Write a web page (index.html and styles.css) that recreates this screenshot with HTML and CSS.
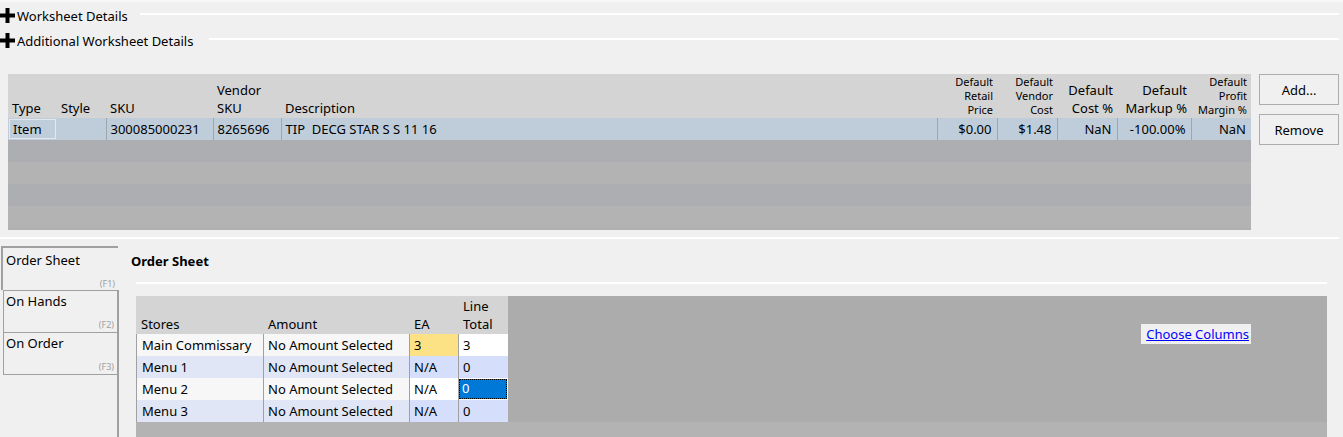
FILE: index.html
```html
<!DOCTYPE html>
<html lang="en">
<head>
<meta charset="utf-8">
<title>Worksheet</title>
<link rel="stylesheet" href="styles.css">
</head>
<body>
<div class="page">
  <div class="group-header first">
    <svg class="plus" viewBox="0 0 15 15" aria-hidden="true"><path d="M5.5 0h4v5.5H15v4H9.5V15h-4V9.5H0v-4h5.5z" fill="#000"/></svg>
    <span class="group-title">Worksheet Details</span>
    <div class="group-rule"></div>
  </div>
  <div class="group-header">
    <svg class="plus" viewBox="0 0 15 15" aria-hidden="true"><path d="M5.5 0h4v5.5H15v4H9.5V15h-4V9.5H0v-4h5.5z" fill="#000"/></svg>
    <span class="group-title">Additional Worksheet Details</span>
    <div class="group-rule second"></div>
  </div>

  <div class="items-area">
    <div class="items-grid">
      <table class="items">
        <colgroup>
          <col style="width:49px"><col style="width:49px"><col style="width:107px"><col style="width:68px"><col style="width:656px">
          <col style="width:60px"><col style="width:60px"><col style="width:60px"><col style="width:74px"><col style="width:60px">
        </colgroup>
        <thead>
          <tr>
            <th>Type</th>
            <th>Style</th>
            <th>SKU</th>
            <th>Vendor<br>SKU</th>
            <th>Description</th>
            <th class="num small">Default<br>Retail<br>Price</th>
            <th class="num small">Default<br>Vendor<br>Cost</th>
            <th class="num">Default<br>Cost %</th>
            <th class="num">Default<br>Markup %</th>
            <th class="num small">Default<br>Profit<br>Margin %</th>
          </tr>
        </thead>
        <tbody>
          <tr class="sel-row">
            <td class="focus"><span class="focus-box">Item</span></td>
            <td></td>
            <td class="sep">300085000231</td>
            <td class="sep">8265696</td>
            <td class="sep desc">TIP  DECG STAR S S 11 16</td>
            <td class="sep num">$0.00</td>
            <td class="sep num">$1.48</td>
            <td class="sep num">NaN</td>
            <td class="sep num">-100.00%</td>
            <td class="sep num">NaN</td>
          </tr>
          <tr class="filler a"><td colspan="10"></td></tr>
          <tr class="filler b"><td colspan="10"></td></tr>
          <tr class="filler a"><td colspan="10"></td></tr>
          <tr class="filler b"><td colspan="10"></td></tr>
        </tbody>
      </table>
    </div>
    <div class="side-buttons">
      <button class="btn">Add...</button>
      <button class="btn">Remove</button>
    </div>
  </div>

  <div class="splitter"></div>

  <div class="bottom">
    <div class="tabs">
      <div class="tab selected">
        <span class="tab-label">Order Sheet</span>
        <span class="tab-key">(F1)</span>
      </div>
      <div class="tab-rest">
        <div class="tab">
          <span class="tab-label">On Hands</span>
          <span class="tab-key">(F2)</span>
        </div>
        <div class="tab last">
          <span class="tab-label">On Order</span>
          <span class="tab-key">(F3)</span>
        </div>
      </div>
    </div>

    <div class="tab-content">
      <div class="content-title">Order Sheet</div>
      <div class="content-rule"></div>
      <div class="order-grid">
        <div class="order-top">
          <div class="order-table">
            <div class="o-row o-head">
              <div class="o-cell c-store">Stores</div>
              <div class="o-cell c-amount">Amount</div>
              <div class="o-cell c-ea">EA</div>
              <div class="o-cell c-total">Line<br>Total</div>
            </div>
            <div class="o-row r-light">
              <div class="o-cell c-store">Main Commissary</div>
              <div class="o-cell c-amount">No Amount Selected</div>
              <div class="o-cell c-ea edit-yellow">3</div>
              <div class="o-cell c-total edit-white">3</div>
            </div>
            <div class="o-row r-blue">
              <div class="o-cell c-store">Menu 1</div>
              <div class="o-cell c-amount">No Amount Selected</div>
              <div class="o-cell c-ea">N/A</div>
              <div class="o-cell c-total">0</div>
            </div>
            <div class="o-row r-light">
              <div class="o-cell c-store">Menu 2</div>
              <div class="o-cell c-amount">No Amount Selected</div>
              <div class="o-cell c-ea edit-white">N/A</div>
              <div class="o-cell c-total current"><span class="current-box">0</span></div>
            </div>
            <div class="o-row r-blue">
              <div class="o-cell c-store">Menu 3</div>
              <div class="o-cell c-amount">No Amount Selected</div>
              <div class="o-cell c-ea">N/A</div>
              <div class="o-cell c-total">0</div>
            </div>
          </div>
        </div>
        <div class="order-bottom"></div>
        <a class="choose-columns" href="#">Choose Columns</a>
      </div>
    </div>
  </div>
</div>
</body>
</html>
```

FILE: styles.css
```css
* { box-sizing: border-box; }
html, body { margin: 0; padding: 0; }
body {
  background: #f0f0f0;
  font-family: "Noto Sans", "Open Sans", sans-serif;
  font-size: 13px;
  color: #000;
  overflow: hidden;
}
.page {
  width: 1343px;
  height: 437px;
  border-top: 2px solid #f7f7f7;
  display: flex;
  flex-direction: column;
  overflow: hidden;
}

/* collapsible group headers */
.group-header {
  display: flex;
  align-items: center;
  height: 25px;
  padding-right: 4px;
  flex: none;
}
.group-header.first { margin-top: 1px; }
.plus { width: 15px; height: 15px; flex: none; margin-right: 2px; }
.group-title { white-space: nowrap; }
.group-rule {
  flex: 1;
  height: 2px;
  background: #fff;
  margin-left: 12px;
  margin-bottom: 3px;
}
.group-rule.second { margin-left: 16px; }

/* items grid */
.items-area {
  display: flex;
  margin-top: 21px;
  padding-left: 8px;
  flex: none;
}
.items-grid {
  width: 1243px;
  height: 156px;
  background: #b0b0b2;
  overflow: hidden;
}
.items {
  border-collapse: collapse;
  table-layout: fixed;
  width: 1243px;
}
.items th {
  height: 44px;
  background: #d4d4d4;
  font-weight: normal;
  text-align: left;
  vertical-align: bottom;
  padding: 0 3px 1px 4px;
  line-height: 18px;
  white-space: nowrap;
}
.items th.num { text-align: right; padding-right: 4px; padding-left: 0; }
.items th.small { font-size: 11px; line-height: 14px; padding-bottom: 1px; }
.items td {
  height: 22px;
  padding: 0 4px;
  white-space: pre;
  overflow: hidden;
}
.sel-row td { background: #bfcddb; }
.items td.sep { border-left: 1px solid #9ea6ae; }
.items td.num { text-align: right; padding-right: 5px; }
.items td.focus { padding: 1px; }
.focus-box {
  display: block;
  height: 20px;
  line-height: 18px;
  border: 1px solid #e2e8ee;
  padding-left: 3px;
}
.filler td { height: 22px; padding: 0; }
.filler.a td { background: #adaeb1; }
.filler.b td { background: #b3b3b3; }

.side-buttons {
  display: flex;
  flex-direction: column;
  gap: 9px;
  margin-left: 8px;
}
.btn {
  width: 80px;
  height: 31px;
  background: #f0f0f0;
  border: 1px solid #adadad;
  font: inherit;
  color: #000;
  padding: 0;
}

.splitter {
  flex: none;
  width: 1339px;
  height: 2px;
  background: #fff;
  margin-top: 7px;
}

/* bottom area */
.bottom {
  flex: 1;
  display: flex;
  padding-top: 7px;
  min-height: 0;
}
.tabs {
  width: 119px;
  flex: none;
  display: flex;
  flex-direction: column;
}
.tab {
  height: 42px;
  border-left: 1px solid #a0a0a0;
  border-top: 1px solid #a0a0a0;
  display: flex;
  flex-direction: column;
  justify-content: space-between;
  padding: 1px 1px 1px 2px;
}
.tab.last { height: 43px; border-bottom: 1px solid #a0a0a0; }
.tab.selected {
  margin-left: 1px;
  width: 117px;
  height: 44px;
  border-left: 2px solid #a0a0a0;
  border-top: 2px solid #a0a0a0;
  padding: 3px 3px 0 3px;
}
.tab-label { line-height: 18px; }
.tab-key {
  align-self: flex-end;
  font-size: 9px;
  line-height: 12px;
  color: #a0a0a0;
}
.tab-rest {
  flex: 1;
  margin-left: 3px;
  border-right: 2px solid #a0a0a0;
}
.tab-rest .tab { padding-right: 3px; }

.tab-content {
  flex: 1;
  display: flex;
  flex-direction: column;
  padding-left: 12px;
  min-width: 0;
}
.content-title {
  font-weight: bold;
  line-height: 18px;
  margin-top: 6px;
}
.content-rule {
  height: 2px;
  background: #fff;
  margin: 12px 16px 0 5px;
}
.order-grid {
  position: relative;
  flex: 1;
  margin: 12px 16px 0 5px;
  background: #acacac;
  display: flex;
  flex-direction: column;
}
.order-top { height: 126px; display: flex; flex: none; }
.order-bottom { flex: 1; background: #b3b3b3; }
.order-table { width: 372px; }
.o-row { display: flex; height: 22px; }
.o-cell {
  line-height: 22px;
  white-space: nowrap;
  overflow: hidden;
  border-right: 1px solid #a0a0a0;
}
.c-store { width: 128px; padding-left: 5px; border-left: 1px solid #a0a0a0; }
.c-amount { width: 146px; padding-left: 4px; }
.c-ea { width: 49px; padding-left: 4px; }
.c-total { width: 49px; padding-left: 4px; border-right: none; }
.o-head { height: 38px; background: #d4d4d4; align-items: flex-end; }
.o-head .o-cell { border: none; line-height: 18px; padding-bottom: 1px; }
.o-head .c-store { padding-left: 5px; }
.r-light { background: #f7f7f7; }
.r-blue { background: #e0e6f5; }
.r-blue .c-ea, .r-blue .c-total { background: #d5dffb; }
.edit-yellow { background: #fde285; }
.edit-white { background: #fff; }
.current { padding: 1px 1px 1px 0; background: #fff; }
.current-box {
  display: block;
  height: 20px;
  line-height: 18px;
  background: #0078d7;
  color: #fff;
  outline: 1px dotted #000;
  outline-offset: -1px;
  padding-left: 3px;
}
.choose-columns {
  position: absolute;
  top: 28px;
  right: 76px;
  height: 20px;
  line-height: 20px;
  padding: 0 2px 0 5px;
  background: #f0f0f0;
  color: #0000ff;
  text-decoration: underline;
}
```
